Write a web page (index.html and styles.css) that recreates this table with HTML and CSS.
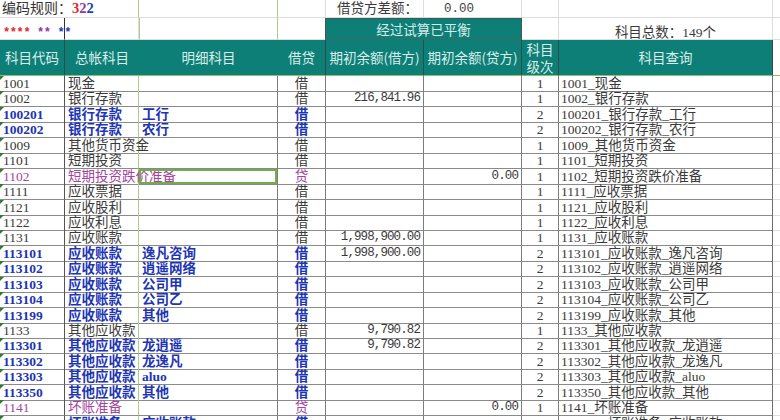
FILE: index.html
```html
<!DOCTYPE html>
<html lang="zh">
<head>
<meta charset="utf-8">
<title>科目设置</title>
<link rel="stylesheet" href="styles.css">
</head>
<body>
<div class="sheet">
  <div class="head">
    <div class="h rule"><span>编码规则：</span><b class="r">3</b><b class="p">2</b><b class="b">2</b></div>
    <div class="h gcol"></div>
    <div class="h"></div>
    <div class="h label">借贷方差额：</div>
    <div class="h zero">0.00</div>
    <div class="h"></div>
    <div class="h"></div>
    <div class="h last"></div>

    <div class="h stars"><span class="r">****</span> <span class="p">**</span> <span class="b">**</span></div>
    <div class="h"></div>
    <div class="h gcol"></div>
    <div class="h"></div>
    <div class="h balance">经过试算已平衡</div>
    <div class="h"></div>
    <div class="h total">科目总数：149个</div>
    <div class="h last"></div>

    <div class="th dark">科目代码</div>
    <div class="th">总帐科目</div>
    <div class="th">明细科目</div>
    <div class="th dark-l">借贷</div>
    <div class="th dark">期初余额(借方)</div>
    <div class="th dark">期初余额(贷方)</div>
    <div class="th dark two"><span>科目</span><span>级次</span></div>
    <div class="th dark">科目查询</div>
    <div class="th-gap"></div>
  </div>

  <div class="rows">
    <div class="row"><div class="c code">1001</div><div class="c gen">现金</div><div class="c det"></div><div class="c dc">借</div><div class="c amt"></div><div class="c amt"></div><div class="c lv">1</div><div class="c q">1001_现金</div><div class="c end"></div></div>
    <div class="row"><div class="c code">1002</div><div class="c gen">银行存款</div><div class="c det"></div><div class="c dc">借</div><div class="c amt">216,841.96</div><div class="c amt"></div><div class="c lv">1</div><div class="c q">1002_银行存款</div><div class="c end"></div></div>
    <div class="row sub"><div class="c code">100201</div><div class="c gen">银行存款</div><div class="c det">工行</div><div class="c dc">借</div><div class="c amt"></div><div class="c amt"></div><div class="c lv">2</div><div class="c q">100201_银行存款_工行</div><div class="c end"></div></div>
    <div class="row sub"><div class="c code">100202</div><div class="c gen">银行存款</div><div class="c det">农行</div><div class="c dc">借</div><div class="c amt"></div><div class="c amt"></div><div class="c lv">2</div><div class="c q">100202_银行存款_农行</div><div class="c end"></div></div>
    <div class="row"><div class="c code">1009</div><div class="c gen">其他货币资金</div><div class="c det"></div><div class="c dc">借</div><div class="c amt"></div><div class="c amt"></div><div class="c lv">1</div><div class="c q">1009_其他货币资金</div><div class="c end"></div></div>
    <div class="row"><div class="c code">1101</div><div class="c gen">短期投资</div><div class="c det"></div><div class="c dc">借</div><div class="c amt"></div><div class="c amt"></div><div class="c lv">1</div><div class="c q">1101_短期投资</div><div class="c end"></div></div>
    <div class="row cr"><div class="c code">1102</div><div class="c gen">短期投资跌价准备</div><div class="c det sel"></div><div class="c dc">贷</div><div class="c amt"></div><div class="c amt">0.00</div><div class="c lv">1</div><div class="c q">1102_短期投资跌价准备</div><div class="c end"></div></div>
    <div class="row"><div class="c code">1111</div><div class="c gen">应收票据</div><div class="c det"></div><div class="c dc">借</div><div class="c amt"></div><div class="c amt"></div><div class="c lv">1</div><div class="c q">1111_应收票据</div><div class="c end"></div></div>
    <div class="row"><div class="c code">1121</div><div class="c gen">应收股利</div><div class="c det"></div><div class="c dc">借</div><div class="c amt"></div><div class="c amt"></div><div class="c lv">1</div><div class="c q">1121_应收股利</div><div class="c end"></div></div>
    <div class="row"><div class="c code">1122</div><div class="c gen">应收利息</div><div class="c det"></div><div class="c dc">借</div><div class="c amt"></div><div class="c amt"></div><div class="c lv">1</div><div class="c q">1122_应收利息</div><div class="c end"></div></div>
    <div class="row"><div class="c code">1131</div><div class="c gen">应收账款</div><div class="c det"></div><div class="c dc">借</div><div class="c amt">1,998,900.00</div><div class="c amt"></div><div class="c lv">1</div><div class="c q">1131_应收账款</div><div class="c end"></div></div>
    <div class="row sub"><div class="c code">113101</div><div class="c gen">应收账款</div><div class="c det">逸凡咨询</div><div class="c dc">借</div><div class="c amt">1,998,900.00</div><div class="c amt"></div><div class="c lv">2</div><div class="c q">113101_应收账款_逸凡咨询</div><div class="c end"></div></div>
    <div class="row sub"><div class="c code">113102</div><div class="c gen">应收账款</div><div class="c det">逍遥网络</div><div class="c dc">借</div><div class="c amt"></div><div class="c amt"></div><div class="c lv">2</div><div class="c q">113102_应收账款_逍遥网络</div><div class="c end"></div></div>
    <div class="row sub"><div class="c code">113103</div><div class="c gen">应收账款</div><div class="c det">公司甲</div><div class="c dc">借</div><div class="c amt"></div><div class="c amt"></div><div class="c lv">2</div><div class="c q">113103_应收账款_公司甲</div><div class="c end"></div></div>
    <div class="row sub"><div class="c code">113104</div><div class="c gen">应收账款</div><div class="c det">公司乙</div><div class="c dc">借</div><div class="c amt"></div><div class="c amt"></div><div class="c lv">2</div><div class="c q">113104_应收账款_公司乙</div><div class="c end"></div></div>
    <div class="row sub"><div class="c code">113199</div><div class="c gen">应收账款</div><div class="c det">其他</div><div class="c dc">借</div><div class="c amt"></div><div class="c amt"></div><div class="c lv">2</div><div class="c q">113199_应收账款_其他</div><div class="c end"></div></div>
    <div class="row"><div class="c code">1133</div><div class="c gen">其他应收款</div><div class="c det"></div><div class="c dc">借</div><div class="c amt">9,790.82</div><div class="c amt"></div><div class="c lv">1</div><div class="c q">1133_其他应收款</div><div class="c end"></div></div>
    <div class="row sub"><div class="c code">113301</div><div class="c gen">其他应收款</div><div class="c det">龙逍遥</div><div class="c dc">借</div><div class="c amt">9,790.82</div><div class="c amt"></div><div class="c lv">2</div><div class="c q">113301_其他应收款_龙逍遥</div><div class="c end"></div></div>
    <div class="row sub"><div class="c code">113302</div><div class="c gen">其他应收款</div><div class="c det">龙逸凡</div><div class="c dc">借</div><div class="c amt"></div><div class="c amt"></div><div class="c lv">2</div><div class="c q">113302_其他应收款_龙逸凡</div><div class="c end"></div></div>
    <div class="row sub"><div class="c code">113303</div><div class="c gen">其他应收款</div><div class="c det">aluo</div><div class="c dc">借</div><div class="c amt"></div><div class="c amt"></div><div class="c lv">2</div><div class="c q">113303_其他应收款_aluo</div><div class="c end"></div></div>
    <div class="row sub"><div class="c code">113350</div><div class="c gen">其他应收款</div><div class="c det">其他</div><div class="c dc">借</div><div class="c amt"></div><div class="c amt"></div><div class="c lv">2</div><div class="c q">113350_其他应收款_其他</div><div class="c end"></div></div>
    <div class="row cr"><div class="c code">1141</div><div class="c gen">坏账准备</div><div class="c det"></div><div class="c dc">贷</div><div class="c amt"></div><div class="c amt">0.00</div><div class="c lv">1</div><div class="c q">1141_坏账准备</div><div class="c end"></div></div>
    <div class="row sub"><div class="c code">114101</div><div class="c gen">坏账准备</div><div class="c det">应收账款</div><div class="c dc">借</div><div class="c amt"></div><div class="c amt"></div><div class="c lv">2</div><div class="c q">114101_坏账准备_应收账款</div><div class="c end"></div></div>
  </div>
</div>
</body>
</html>
```

FILE: styles.css
```css
html, body {
  margin: 0;
  padding: 0;
  background: #ffffff;
}
body {
  width: 780px;
  height: 420px;
  overflow: hidden;
  font-family: "Liberation Serif", "Noto Sans CJK SC", serif;
  font-size: 13.5px;
  color: #3a3a3a;
}
.sheet {
  width: 780px;
}

/* ---------- header block ---------- */
.head {
  display: grid;
  grid-template-columns: 65px 74px 139px 48px 98px 98px 37px 214px 7px;
  grid-template-rows: 18px 22px 36px;
}
.h {
  box-sizing: border-box;
  border-right: 1px solid #dcdcdc;
  border-bottom: 1px solid #dcdcdc;
  white-space: nowrap;
  line-height: 17px;
  font-family: "Liberation Serif", "Noto Sans CJK SC", serif;
}
.h.last { border-right: none; }
.rule {
  grid-column: span 2;
  padding-left: 2px;
  border-right: 1px solid #a9cf8c;
  font-size: 14px;
  color: #333;
}
.rule b { font-weight: bold; font-size: 14.5px; }
.r { color: #e0262b; }
.p { color: #8a3aa0; }
.b { color: #2338c4; }
.gcol {
  border-left: 1px solid #a9cf8c;
  border-right: 1px solid #a9cf8c;
}
.h.gcol:nth-child(2) { border-left: none; }
.label {
  text-align: center;
  padding-left: 6px;
  font-size: 13.5px;
}
.zero {
  text-align: left;
  padding-left: 20px;
  font-family: "Liberation Mono", "Noto Sans CJK SC", monospace;
  font-size: 12.5px;
  color: #444;
  line-height: 19px;
}
.stars {
  border-right: 1px solid #333;
  padding-left: 3px;
  font-family: "Liberation Mono", monospace;
  font-weight: bold;
  font-size: 12px;
  line-height: 30px;
  letter-spacing: -0.4px;
}
.balance {
  grid-column: span 2;
  background: #0e7f77;
  color: #d4ece8;
  text-align: center;
  font-family: "Noto Sans CJK SC", sans-serif;
  font-size: 13.5px;
  line-height: 21px;
  border-left: 1px solid #3a5a57;
  border-right: 1px solid #3a5a57;
  border-top: 1px solid #3a5a57;
  border-bottom: 1px solid #3a6a66;
  margin-left: -1px;
}
.total {
  text-align: center;
  line-height: 30px;
  font-size: 13.5px;
}

.th {
  background: #0e7f77;
  color: #d8eeea;
  font-family: "Noto Sans CJK SC", sans-serif;
  font-size: 13.5px;
  text-align: center;
  line-height: 35px;
  white-space: nowrap;
  box-sizing: border-box;
  border-bottom: 1px solid #8cbf72;
}
.th.dark { border-right: 1px solid #2f4a48; }
.th.dark-l { border-right: 1px solid #2f4a48; }
.th.two {
  display: flex;
  flex-direction: column;
  align-items: center;
  justify-content: center;
  line-height: 17px;
}
.th-gap {
  border-bottom: 1px solid #8cbf72;
  background: #ffffff;
}

/* ---------- data rows ---------- */
.row {
  display: grid;
  grid-template-columns: 65px 74px 139px 48px 98px 98px 37px 214px 7px;
  height: 15.45px;
}
.c {
  box-sizing: border-box;
  border-right: 1px solid #7d7d7d;
  border-bottom: 1px solid #8a8a8a;
  white-space: nowrap;
  line-height: 15px;
  overflow: visible;
  position: relative;
}
.code {
  padding-left: 3px;
  border-right-color: #555;
}
.code::before {
  content: "";
  position: absolute;
  left: 0;
  top: 0;
  border-top: 4px solid #2f7a2f;
  border-right: 4px solid transparent;
}
.gen {
  padding-left: 3px;
  border-right-color: #a9cf8c;
}
.det {
  padding-left: 3px;
}
.dc { text-align: center; }
.amt {
  text-align: right;
  padding-right: 3px;
  font-family: "Liberation Mono", monospace;
  font-size: 12.5px;
  letter-spacing: -0.9px;
}
.lv {
  text-align: center;
  font-size: 13.5px;
}
.q {
  padding-left: 2px;
  border-right-color: #6d6d6d;
}
.end {
  border-right: none;
  border-bottom: 1px solid #dcdcdc;
}
.sel {
  box-shadow: inset 0 0 0 2px #6fae4a;
}

/* level 2 accounts: bold blue */
.sub .code,
.sub .gen,
.sub .det,
.sub .dc {
  color: #1d35b5;
  font-weight: bold;
}
/* credit accounts: purple */
.cr .code,
.cr .gen,
.cr .dc {
  color: #a5449f;
}
```
